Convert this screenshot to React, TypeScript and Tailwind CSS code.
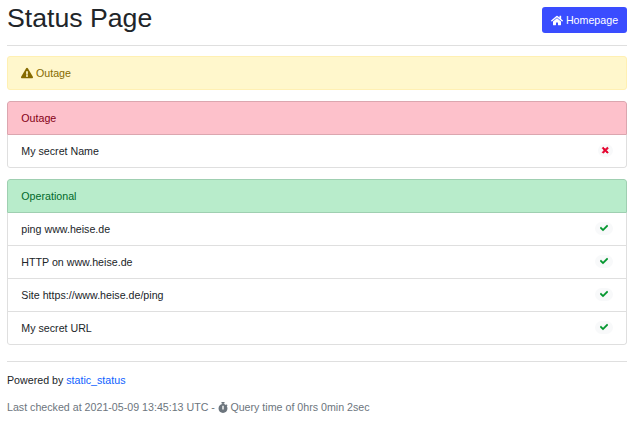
import React from "react";
import { FaHome, FaExclamationTriangle, FaTimes, FaCheck, FaStopwatch } from "react-icons/fa";

function Group({ title, items, ok }: { title: string; items: string[]; ok: boolean }) {
  return (
    <ul className="mb-[11px] overflow-hidden rounded-[3px]">
      <li className={`flex h-[34px] items-center rounded-t-[3px] border px-[13.33px] ${ok ? "border-[#9fcfb1] bg-[#b8eccb] text-[#00692a]" : "border-[#dba6af] bg-[#fdc1cb] text-[#850016]"}`}>
        {title}
      </li>
      {items.map((item) => (
        <li key={item} className="flex h-[33px] items-center justify-between border border-t-0 border-[#dfdfdf] px-[13.33px] last:rounded-b-[3px]">
          <span>{item}</span>
          <span className={`mb-px flex h-[13px] items-center justify-center rounded-full bg-[#f8f9fa] ${ok ? "w-[18px] text-[#00962c]" : "w-[15px] text-[#e6002d]"}`}>
            {ok ? (
              <FaCheck className="mb-px h-2 w-2" stroke="currentColor" strokeWidth={30} />
            ) : (
              <FaTimes className="h-[8.5px] w-[8.5px]" stroke="currentColor" strokeWidth={50} />
            )}
          </span>
        </li>
      ))}
    </ul>
  );
}

export default function App() {
  return (
    <main className="h-[422px] overflow-hidden bg-white px-[7px] pt-px font-['Liberation_Sans',Arial,sans-serif] text-[10.667px] leading-[16px] text-[#212529]">
      <header className="flex h-[45px] justify-between border-b border-[#dfdfdf]">
        <h1 className="text-[26.667px] leading-[35px]">Status Page</h1>
        <button className="mt-[6px] flex h-[26px] w-[85px] items-center justify-center gap-[3px] rounded-[3px] bg-[#3a4dff] text-white">
          <FaHome className="h-[11px] w-[12px]" />
          Homepage
        </button>
      </header>
      <div className="mt-[10px] mb-[11px] flex h-[34px] items-center gap-[3px] rounded-[3px] border border-[#fff0b3] bg-[#fff7cc] px-[13px] text-[#856a00]">
        <FaExclamationTriangle className="h-3 w-3" />
        Outage
      </div>
      <Group title="Outage" items={["My secret Name"]} ok={false} />
      <Group title="Operational" items={["ping www.heise.de", "HTTP on www.heise.de", "Site https://www.heise.de/ping", "My secret URL"]} ok />
      <footer className="mt-4 border-t border-[#dfdfdf] pt-[10px]">
        <p>Powered by <a className="text-[#0d5fff]">static_status</a></p>
        <p className="mt-[11px] flex items-center whitespace-pre text-[#6c757d]">
          {"Last checked at 2021-05-09 13:45:13 UTC - "}
          <FaStopwatch className="mr-[2.5px] h-[11px] w-[10px]" />
          Query time of 0hrs 0min 2sec
        </p>
      </footer>
    </main>
  );
}
